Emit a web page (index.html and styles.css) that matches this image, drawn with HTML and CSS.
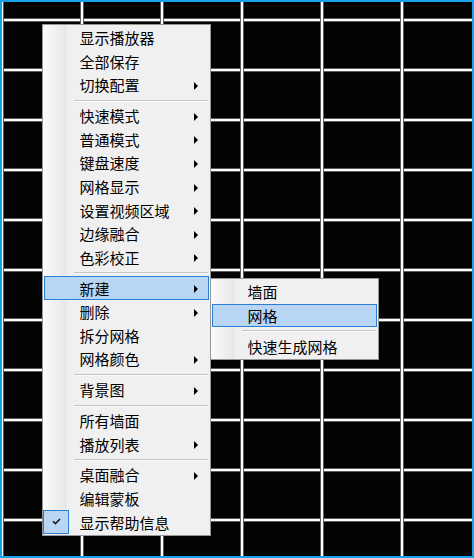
FILE: index.html
```
<!DOCTYPE html>
<html lang="zh-CN">
<head>
<meta charset="utf-8">
<title>菜单</title>
<link rel="stylesheet" href="styles.css">
</head>
<body>
<div class="screen">
  <div class="menu main-menu">
    <div class="item">显示播放器</div>
    <div class="item">全部保存</div>
    <div class="item sub">切换配置<span class="arrow"></span></div>
    <div class="sep"></div>
    <div class="item sub">快速模式<span class="arrow"></span></div>
    <div class="item sub">普通模式<span class="arrow"></span></div>
    <div class="item sub">键盘速度<span class="arrow"></span></div>
    <div class="item sub">网格显示<span class="arrow"></span></div>
    <div class="item sub">设置视频区域<span class="arrow"></span></div>
    <div class="item sub">边缘融合<span class="arrow"></span></div>
    <div class="item sub">色彩校正<span class="arrow"></span></div>
    <div class="sep"></div>
    <div class="item sub active">新建<span class="arrow"></span></div>
    <div class="item sub">删除<span class="arrow"></span></div>
    <div class="item">拆分网格</div>
    <div class="item sub">网格颜色<span class="arrow"></span></div>
    <div class="sep"></div>
    <div class="item sub">背景图<span class="arrow"></span></div>
    <div class="sep"></div>
    <div class="item">所有墙面</div>
    <div class="item sub">播放列表<span class="arrow"></span></div>
    <div class="sep"></div>
    <div class="item sub">桌面融合<span class="arrow"></span></div>
    <div class="item">编辑蒙板</div>
    <div class="item checked"><span class="check"><svg width="9" height="7" viewBox="0 0 9 7"><path d="M1 3.2 L3.4 5.6 L8 1" fill="none" stroke="#1a1a1a" stroke-width="1.6"/></svg></span>显示帮助信息</div>
  </div>
  <div class="menu sub-menu">
    <div class="item">墙面</div>
    <div class="item active">网格</div>
    <div class="sep"></div>
    <div class="item">快速生成网格</div>
  </div>
</div>
</body>
</html>
```
FILE: styles.css
```
html, body {
  margin: 0;
  padding: 0;
}
body {
  width: 474px;
  height: 558px;
  overflow: hidden;
  background: #000;
  font-family: "Noto Sans CJK SC", "Noto Sans", sans-serif;
}
.screen {
  position: relative;
  box-sizing: border-box;
  width: 474px;
  height: 558px;
  border: 2px solid #16a3e9;
  background-color: #030303;
  background-image:
    linear-gradient(to right, #5c5c5c 0 1px, #fff 1px 3px, #5c5c5c 3px 4px, transparent 4px),
    linear-gradient(to bottom, #5c5c5c 0 1px, #fff 1px 3px, #5c5c5c 3px 4px, transparent 4px);
  background-size: 80px 100%, 100% 50px;
  background-position: 78px 0, 0 16px;
  background-repeat: repeat-x, repeat-y;
}
.menu {
  position: absolute;
  box-sizing: border-box;
  width: 169px;
  border: 1px solid #979797;
  padding: 1px 0;
  background: linear-gradient(to right, #fbfbfb 0, #e6e6e6 24px, #f0f0f0 24px);
}
.main-menu {
  left: 40px;
  top: 22px;
}
.sub-menu {
  left: 208px;
  top: 276px;
}
.item {
  position: relative;
  box-sizing: border-box;
  height: 23.6px;
  margin: 0 1px;
  border: 1px solid transparent;
  padding-left: 34.5px;
  display: flex;
  align-items: center;
  font-size: 15px;
  line-height: 1;
  color: #000;
  white-space: nowrap;
}
.label-shift {
  transform: translateY(-0.5px);
}
.item.active {
  border-color: #2a7ed3;
  background: #b8d6f3;
}
.arrow {
  margin-left: auto;
  margin-right: 10px;
  width: 0;
  height: 0;
  border-left: 4px solid #000;
  border-top: 4px solid transparent;
  border-bottom: 4px solid transparent;
  transform: translateY(1px);
}
.sep {
  height: 7.2px;
  display: flex;
  align-items: center;
  padding-left: 31px;
  padding-right: 2px;
}
.sep::before {
  content: "";
  flex: 1;
  height: 1px;
  background: #c6c6c6;
  box-shadow: 0 1px 0 #fafafa;
}
.check {
  position: absolute;
  left: -2px;
  top: -1px;
  box-sizing: border-box;
  width: 26px;
  height: 24px;
  border: 1px solid #2a7ed3;
  background: #b8d6f3;
  display: flex;
  align-items: center;
  justify-content: center;
}
.check svg {
  display: block;
  transform: translate(0, -1px);
}
```
